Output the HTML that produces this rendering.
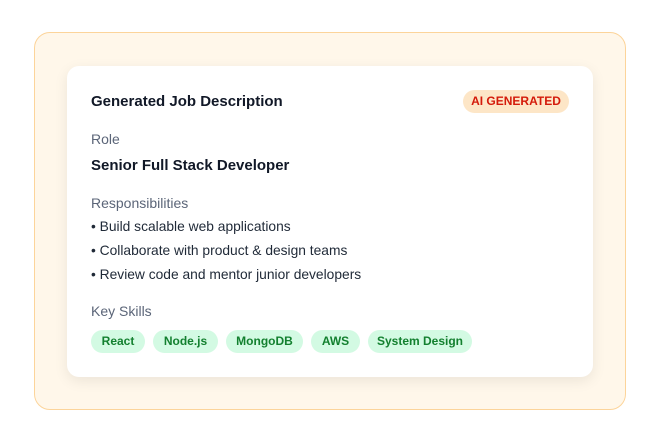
<!DOCTYPE html>
<html><head><style>
*{margin:0;padding:0;box-sizing:border-box}
body{width:660px;height:442px;background:#fff;font-family:"Liberation Sans",sans-serif;position:relative;overflow:hidden}
.outer{position:absolute;left:34px;top:32px;width:592px;height:378px;border:1px solid #fcd49a;border-radius:16px;background:#fff7ea}
.card{position:absolute;left:67px;top:66px;width:526px;height:311px;background:#fff;border-radius:12px;box-shadow:0 4px 14px rgba(0,0,0,0.08)}
.t{position:absolute;left:24px;white-space:nowrap}
.h{font-size:15px;font-weight:bold;color:#111827}
.l{font-size:14px;color:#5b6578}
.b{font-size:13.8px;color:#1f2937}
.badge{position:absolute;left:396px;top:24px;width:106px;height:23px;border-radius:12px;background:#fde6c7;color:#d41a0a;font-size:12px;font-weight:bold;text-align:center;line-height:23px}
.tags{position:absolute;left:24px;top:264px;display:flex;gap:8px}
.tag{height:23px;line-height:23px;border-radius:12px;background:#d3fae3;color:#13802f;font-size:12px;font-weight:bold;text-align:center}
</style></head><body>
<div class="outer"></div>
<div class="card">
<div class="t h" style="top:27px">Generated Job Description</div>
<div class="badge">AI GENERATED</div>
<div class="t l" style="top:65px">Role</div>
<div class="t h" style="top:91px">Senior Full Stack Developer</div>
<div class="t l" style="top:129px">Responsibilities</div>
<div class="t b" style="top:153px">• Build scalable web applications</div>
<div class="t b" style="top:177px">• Collaborate with product &amp; design teams</div>
<div class="t b" style="top:201px">• Review code and mentor junior developers</div>
<div class="t l" style="top:237px">Key Skills</div>
<div class="tags">
<div class="tag" style="width:54px">React</div>
<div class="tag" style="width:65px">Node.js</div>
<div class="tag" style="width:77px">MongoDB</div>
<div class="tag" style="width:49px">AWS</div>
<div class="tag" style="width:104px">System Design</div>
</div>
</div>
</body></html>
